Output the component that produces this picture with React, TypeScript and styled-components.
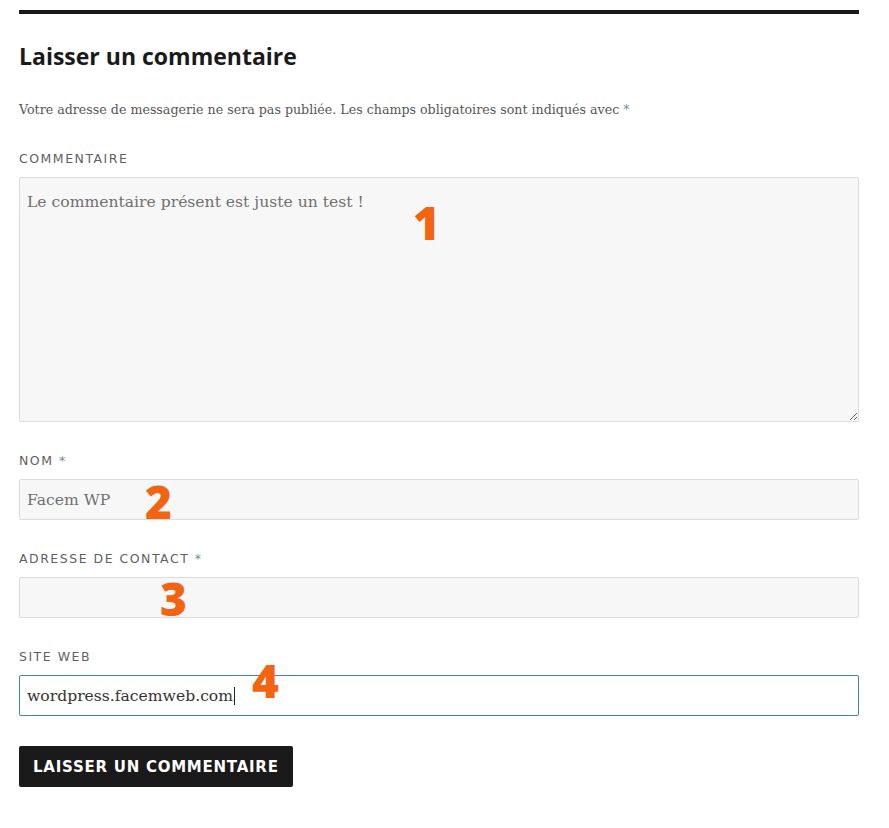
import React from "react";
import styled, { createGlobalStyle } from "styled-components";

const Global = createGlobalStyle`
  html, body { margin: 0; padding: 0; background: #fff; }
  * { box-sizing: border-box; }
`;

const Page = styled.div`
  width: 889px;
  padding: 10px 30px 40px 19px;
`;

const Section = styled.section`
  border-top: 4px solid #1a1a1a;
  padding-top: 27px;
`;

const Heading = styled.h3`
  margin: 0 0 29px;
  font-family: "Open Sans", sans-serif;
  font-weight: 700;
  font-size: 23px;
  line-height: 30px;
  color: #1a1a1a;
`;

const Notes = styled.p`
  margin: 0 0 30px;
  font-family: "DejaVu Serif", serif;
  font-size: 12.65px;
  line-height: 20px;
  color: #555;
`;

const Req = styled.span`
  color: #6a8fa6;
`;

const Field = styled.div`
  margin-bottom: 30px;
`;

const Label = styled.label`
  display: block;
  margin-bottom: 9px;
  font-family: "DejaVu Sans", sans-serif;
  font-size: 12.5px;
  line-height: 18px;
  letter-spacing: 0.12em;
  text-transform: uppercase;
  color: #5f5f5f;
`;

const Control = styled.div`
  position: relative;
`;

const inputBase = `
  display: block;
  width: 840px;
  font-family: "DejaVu Serif", serif;
  font-size: 15.6px;
  color: #707070;
  background: #f7f7f7;
  border: 1px solid #dcdcdc;
  border-radius: 2px;
  padding: 8px 7px;
  outline: none;
`;

const Area = styled.textarea`
  ${inputBase}
  height: 245px;
  padding-top: 12px;
  line-height: 24px;
  resize: vertical;
`;

const Input = styled.input`
  ${inputBase}
  height: 41px;
  line-height: 24px;
`;

const FocusBox = styled.div`
  ${inputBase}
  height: 41px;
  line-height: 24px;
  background: #fff;
  color: #333;
  border-color: #3f86aa;
  display: flex;
  align-items: center;
`;

const Caret = styled.span`
  display: inline-block;
  width: 1px;
  height: 18px;
  background: #222;
  margin-left: 1px;
`;

const Marker = styled.span<{ $x: number; $y: number }>`
  position: absolute;
  left: ${(p) => p.$x}px;
  top: ${(p) => p.$y}px;
  font-family: "Open Sans", sans-serif;
  font-weight: 800;
  font-size: 46px;
  line-height: 1;
  color: #f26411;
  pointer-events: none;
`;

const Submit = styled.button`
  display: block;
  height: 41px;
  padding: 0 14px;
  background: #1a1a1a;
  color: #fff;
  border: none;
  border-radius: 2px;
  font-family: "DejaVu Sans", sans-serif;
  font-weight: 700;
  font-size: 15px;
  letter-spacing: 0.05em;
  text-transform: uppercase;
`;

export default function App() {
  return (
    <Page>
      <Global />
      <Section>
        <Heading>Laisser un commentaire</Heading>
        <Notes>
          Votre adresse de messagerie ne sera pas publiée. Les champs obligatoires sont indiqués avec <Req>*</Req>
        </Notes>
        <Field>
          <Label>Commentaire</Label>
          <Control>
            <Area defaultValue="Le commentaire présent est juste un test !" />
            <Marker $x={394} $y={22}>1</Marker>
          </Control>
        </Field>
        <Field>
          <Label>
            Nom <Req>*</Req>
          </Label>
          <Control>
            <Input defaultValue="Facem WP" />
            <Marker $x={126} $y={-1}>2</Marker>
          </Control>
        </Field>
        <Field>
          <Label>
            Adresse de contact <Req>*</Req>
          </Label>
          <Control>
            <Input defaultValue="" />
            <Marker $x={141} $y={-2}>3</Marker>
          </Control>
        </Field>
        <Field>
          <Label>Site Web</Label>
          <Control>
            <FocusBox>
              wordpress.facemweb.com<Caret />
            </FocusBox>
            <Marker $x={233} $y={-18}>4</Marker>
          </Control>
        </Field>
        <Submit type="button">Laisser un commentaire</Submit>
      </Section>
    </Page>
  );
}
